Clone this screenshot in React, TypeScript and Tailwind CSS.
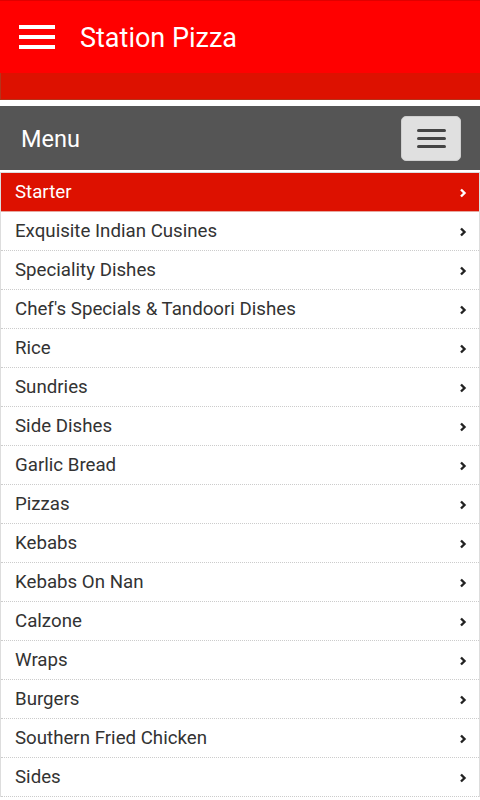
const items = [
  "Starter",
  "Exquisite Indian Cusines",
  "Speciality Dishes",
  "Chef's Specials & Tandoori Dishes",
  "Rice",
  "Sundries",
  "Side Dishes",
  "Garlic Bread",
  "Pizzas",
  "Kebabs",
  "Kebabs On Nan",
  "Calzone",
  "Wraps",
  "Burgers",
  "Southern Fried Chicken",
  "Sides",
];

function Chevron({ className }: { className?: string }) {
  return (
    <svg width="8" height="10" viewBox="0 0 8 10" className={className}>
      <path d="M2 1.5 L5.5 5 L2 8.5" fill="none" stroke="currentColor" strokeWidth="2.4" />
    </svg>
  );
}

export default function App() {
  return (
    <div className="h-[800px] w-[480px] overflow-hidden bg-white font-['Roboto',sans-serif]">
      {/* top app bar */}
      <header className="flex h-[73px] items-center border-t border-[#e00000] bg-[#ff0000] pl-[19px]">
        <div className="flex w-[36px] flex-col gap-[6px]">
          <span className="h-[4px] bg-white" />
          <span className="h-[4px] bg-white" />
          <span className="h-[4px] bg-white" />
        </div>
        <h1 className="ml-[25px] pt-[2px] text-[27px] leading-none text-white">Station Pizza</h1>
      </header>
      <div className="h-[27px] border-b border-l border-[#b5331a] bg-[#dd1100]" />

      <div className="mt-[6px] flex h-[64px] items-center justify-between bg-[#555555] pl-[21px] pr-[19px]">
        <span className="pt-[4px] text-[23.5px] text-white">Menu</span>
        <button className="flex h-[45px] w-[60px] flex-col items-center justify-center gap-[5px] rounded-[5px] border border-[#cfcfcf] bg-[#e0e0e0]">
          <span className="h-[3px] w-[29px] rounded-full bg-[#444]" />
          <span className="h-[3px] w-[29px] rounded-full bg-[#444]" />
          <span className="h-[3px] w-[29px] rounded-full bg-[#444]" />
        </button>
      </div>

      <ul className="mt-[2px] border-x border-t border-[#dddddd]">
        {items.map((label, i) => (
          <li
            key={label}
            className={
              i === 0
                ? "flex h-[39px] items-center justify-between border-b border-[#e6a8a0] bg-[#dd1100] pl-[14px] pr-[12px] pt-[1px] text-[18.7px] text-white"
                : "flex h-[39px] items-center justify-between border-b border-dotted border-[#cccccc] pl-[14px] pr-[12px] pt-[1px] text-[18.7px] text-[#333333]"
            }
          >
            <span>{label}</span>
            <Chevron className={i === 0 ? "text-white" : "text-[#222]"} />
          </li>
        ))}
      </ul>
    </div>
  );
}
